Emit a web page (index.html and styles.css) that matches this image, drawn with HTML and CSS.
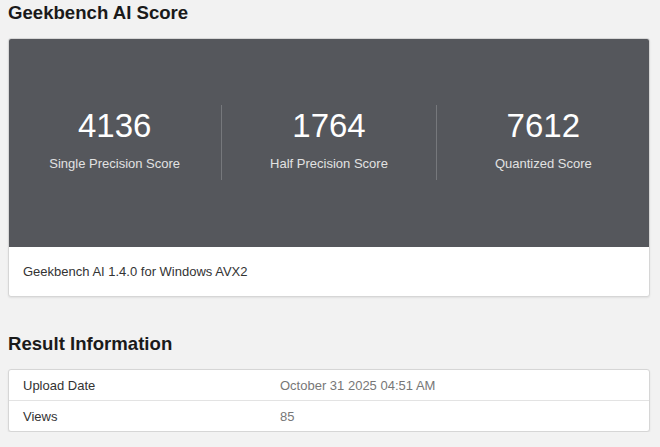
FILE: index.html
```html
<!DOCTYPE html>
<html lang="en">
<head>
    <meta charset="UTF-8">
    <title>Geekbench AI Score</title>
    <link rel="stylesheet" href="styles.css">
</head>
<body>
    <h2 class="section-title">Geekbench AI Score</h2>
    <div class="card">
        <div class="scores">
            <div class="score">
                <div class="score-value">4136</div>
                <div class="score-label">Single Precision Score</div>
            </div>
            <div class="score">
                <div class="score-value">1764</div>
                <div class="score-label">Half Precision Score</div>
            </div>
            <div class="score">
                <div class="score-value">7612</div>
                <div class="score-label">Quantized Score</div>
            </div>
        </div>
        <div class="card-footer">Geekbench AI 1.4.0 for Windows AVX2</div>
    </div>

    <h2 class="section-title info-title">Result Information</h2>
    <div class="card info-table">
        <div class="info-row">
            <div class="info-name">Upload Date</div>
            <div class="info-value">October 31 2025 04:51 AM</div>
        </div>
        <div class="info-row">
            <div class="info-name">Views</div>
            <div class="info-value">85</div>
        </div>
    </div>
</body>
</html>
```

FILE: styles.css
```css
body {
    font-family: "Liberation Sans", Arial, sans-serif;
    background-color: #f2f2f2;
    margin: 0;
    padding: 0 10px 0 8px;
    color: #222;
}

.section-title {
    font-size: 18.6px;
    font-weight: bold;
    margin: 0;
    padding-top: 3px;
    height: 35px;
    line-height: 20px;
    color: #1a1a1a;
}

.card {
    background-color: #fff;
    border: 1px solid #d6d6d6;
    border-radius: 3px;
    box-shadow: 0 1px 2px rgba(0,0,0,0.08);
    overflow: hidden;
}

.scores {
    background-color: #55575c;
    height: 209px;
    display: flex;
    align-items: center;
    margin: -1px -1px 0 -1px;
}

.score {
    flex: 1;
    text-align: center;
    color: #fff;
    height: 75px;
    border-left: 1px solid #76787c;
}

.score:first-child {
    border-left: none;
}

.score-value {
    font-size: 33px;
    line-height: 40px;
    padding-top: 1px;
}

.score-label {
    font-size: 13px;
    color: #e2e2e2;
    margin-top: 10px;
}

.card-footer {
    height: 49px;
    line-height: 50px;
    padding-left: 14px;
    font-size: 13px;
    color: #333;
}

.info-title {
    margin-top: 34px;
}

.info-row {
    display: flex;
    height: 30px;
    line-height: 31px;
    font-size: 13px;
    border-top: 1px solid #e3e3e3;
}

.info-row:first-child {
    border-top: none;
}

.info-name {
    width: 257px;
    padding-left: 14px;
    color: #333;
}

.info-value {
    color: #777;
}
```
